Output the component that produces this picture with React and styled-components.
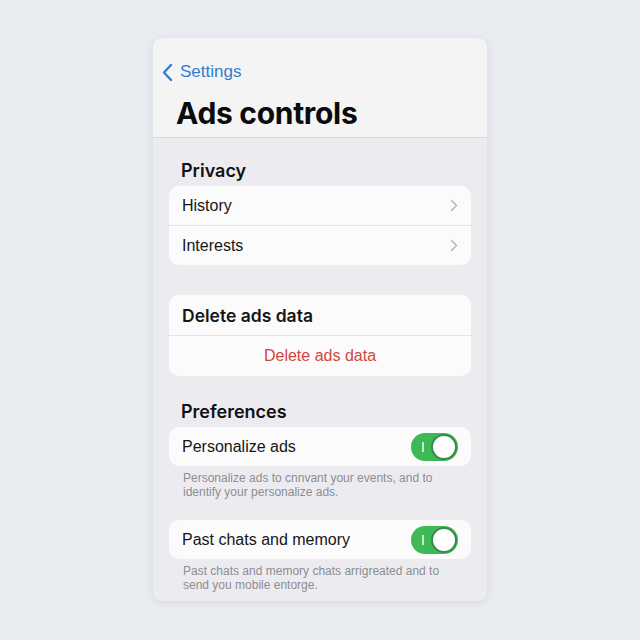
import React from "react";
import styled, { createGlobalStyle } from "styled-components";

const GlobalStyle = createGlobalStyle`
  html, body {
    margin: 0;
    padding: 0;
    background: #e9ecf0;
    font-family: "Liberation Sans", Arial, sans-serif;
    -webkit-font-smoothing: antialiased;
  }
`;

const Page = styled.div`
  display: flex;
  justify-content: center;
  padding-top: 38px;
  height: 640px;
  box-sizing: border-box;
`;

const Panel = styled.div`
  width: 334px;
  height: 563px;
  border-radius: 9px;
  overflow: hidden;
  background: #ececf0;
  box-shadow: 0 2px 8px rgba(40, 50, 70, 0.1);
  display: flex;
  flex-direction: column;
`;

const Header = styled.div`
  height: 100px;
  background: #f4f4f5;
  border-bottom: 1px solid #d9d9dc;
  padding: 23px 0 0 9px;
  box-sizing: border-box;
`;

const BackLink = styled.div`
  display: flex;
  align-items: center;
  gap: 7px;
  color: #2f7fd0;
  font-size: 17px;
  height: 22px;
`;

const Title = styled.h1`
  margin: 13px 0 0 14px;
  font-family: Inter, "Liberation Sans", sans-serif;
  font-size: 30px;
  font-weight: 700;
  color: #0b0b0c;
  letter-spacing: -0.3px;
  line-height: 34px;
`;

const Body = styled.div`
  padding: 22px 16px 0;
  display: flex;
  flex-direction: column;
`;

const SectionTitle = styled.h2`
  margin: ${({ $top }) => $top || 0}px 0 4px 12px;
  font-family: Inter, "Liberation Sans", sans-serif;
  font-size: 18px;
  font-weight: 600;
  color: #111;
  line-height: 22px;
`;

const Card = styled.div`
  background: #fbfbfb;
  border-radius: 10px;
  margin-top: ${({ $top }) => $top || 0}px;
  overflow: hidden;
`;

const Row = styled.div`
  height: ${({ $h }) => $h || 39}px;
  display: flex;
  align-items: center;
  justify-content: ${({ $center }) => ($center ? "center" : "space-between")};
  padding: 0 13px 0 13px;
  font-family: ${({ $bold }) => ($bold ? 'Inter, "Liberation Sans", sans-serif' : 'inherit')};
  font-size: ${({ $bold }) => ($bold ? 17.5 : 16)}px;
  font-weight: ${({ $bold }) => ($bold ? 600 : 400)};
  color: ${({ $danger }) => ($danger ? "#d4443f" : "#161616")};
  & + & {
    border-top: 1px solid #e4e4e6;
  }
`;

const Note = styled.p`
  margin: 5px 0 0 14px;
  font-size: 12px;
  line-height: 14px;
  color: #8d8d92;
  width: 270px;
`;

const Toggle = styled.div`
  width: 47px;
  height: 28px;
  border-radius: 14px;
  background: #3dba55;
  position: relative;
  box-sizing: border-box;
  &::before {
    content: "";
    position: absolute;
    left: 11px;
    top: 9px;
    width: 1.5px;
    height: 10px;
    background: rgba(255, 255, 255, 0.7);
  }
  &::after {
    content: "";
    position: absolute;
    right: 1px;
    top: 1px;
    width: 26px;
    height: 26px;
    border-radius: 50%;
    background: #fff;
    box-sizing: border-box;
    border: 2px solid #3a8a4d;
  }
`;

const Chevron = () => (
  <svg width="8" height="13" viewBox="0 0 8 13" fill="none">
    <path d="M1.5 1.5l5 5-5 5" stroke="#b9b9bd" strokeWidth="1.6" strokeLinecap="round" strokeLinejoin="round" />
  </svg>
);

const BackChevron = () => (
  <svg width="11" height="19" viewBox="0 0 11 19" fill="none">
    <path d="M9 2L2 9.5 9 17" stroke="#2f7fd0" strokeWidth="2.4" strokeLinecap="round" strokeLinejoin="round" />
  </svg>
);

export default function App() {
  return (
    <>
      <GlobalStyle />
      <Page>
        <Panel>
          <Header>
            <BackLink>
              <BackChevron />
              Settings
            </BackLink>
            <Title>Ads controls</Title>
          </Header>
          <Body>
            <SectionTitle>Privacy</SectionTitle>
            <Card>
              <Row>
                History
                <Chevron />
              </Row>
              <Row>
                Interests
                <Chevron />
              </Row>
            </Card>

            <Card $top={30}>
              <Row $h={40} $bold>Delete ads data</Row>
              <Row $h={40} $center $danger>Delete ads data</Row>
            </Card>

            <SectionTitle $top={25}>Preferences</SectionTitle>
            <Card>
              <Row>
                Personalize ads
                <Toggle />
              </Row>
            </Card>
            <Note>Personalize ads to cnnvant your events, and to identify your personalize ads.</Note>

            <Card $top={21}>
              <Row>
                Past chats and memory
                <Toggle />
              </Row>
            </Card>
            <Note>Past chats and memory chats arrigreated and to send you mobile entorge.</Note>
          </Body>
        </Panel>
      </Page>
    </>
  );
}
